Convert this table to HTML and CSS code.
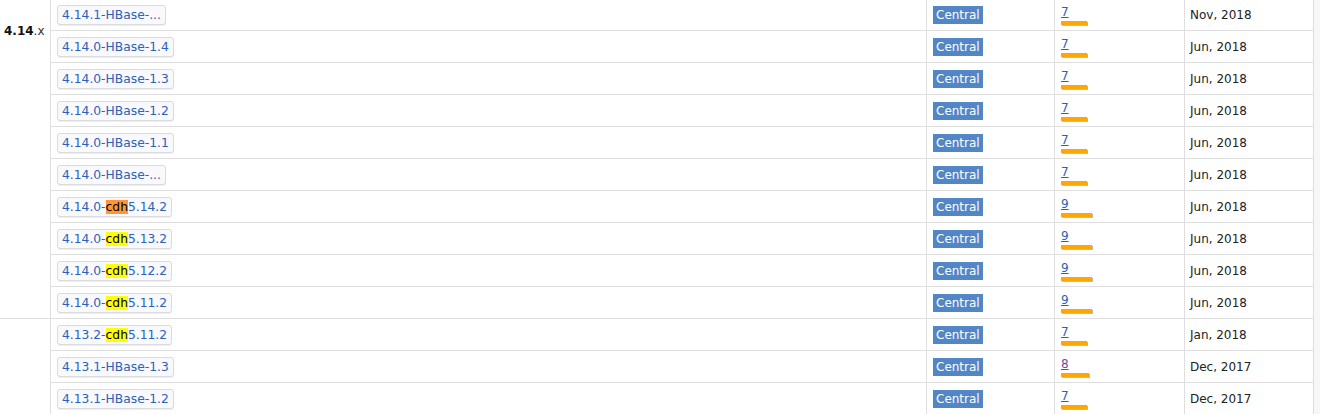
FILE: index.html
```html
<!DOCTYPE html>
<html lang="en">
<head>
<meta charset="utf-8">
<title>Versions</title>
<link rel="stylesheet" href="styles.css">
</head>
<body>
<div class="versions">
  <div class="group g-first"><b>4.14</b>.x</div>

  <div class="cell c-ver"><a class="vbtn">4.14.1-HBase-...</a></div>
  <div class="cell c-repo"><a class="repo">Central</a></div>
  <div class="cell c-use"><a class="num">7</a><div class="bar" style="width:26px"></div></div>
  <div class="cell c-date">Nov, 2018</div>

  <div class="cell c-ver"><a class="vbtn">4.14.0-HBase-1.4</a></div>
  <div class="cell c-repo"><a class="repo">Central</a></div>
  <div class="cell c-use"><a class="num">7</a><div class="bar" style="width:26px"></div></div>
  <div class="cell c-date">Jun, 2018</div>

  <div class="cell c-ver"><a class="vbtn">4.14.0-HBase-1.3</a></div>
  <div class="cell c-repo"><a class="repo">Central</a></div>
  <div class="cell c-use"><a class="num">7</a><div class="bar" style="width:26px"></div></div>
  <div class="cell c-date">Jun, 2018</div>

  <div class="cell c-ver"><a class="vbtn">4.14.0-HBase-1.2</a></div>
  <div class="cell c-repo"><a class="repo">Central</a></div>
  <div class="cell c-use"><a class="num">7</a><div class="bar" style="width:26px"></div></div>
  <div class="cell c-date">Jun, 2018</div>

  <div class="cell c-ver"><a class="vbtn">4.14.0-HBase-1.1</a></div>
  <div class="cell c-repo"><a class="repo">Central</a></div>
  <div class="cell c-use"><a class="num">7</a><div class="bar" style="width:26px"></div></div>
  <div class="cell c-date">Jun, 2018</div>

  <div class="cell c-ver"><a class="vbtn">4.14.0-HBase-...</a></div>
  <div class="cell c-repo"><a class="repo">Central</a></div>
  <div class="cell c-use"><a class="num">7</a><div class="bar" style="width:26px"></div></div>
  <div class="cell c-date">Jun, 2018</div>

  <div class="cell c-ver"><a class="vbtn">4.14.0-<mark class="hl hl-active">cdh</mark>5.14.2</a></div>
  <div class="cell c-repo"><a class="repo">Central</a></div>
  <div class="cell c-use"><a class="num">9</a><div class="bar" style="width:31px"></div></div>
  <div class="cell c-date">Jun, 2018</div>

  <div class="cell c-ver"><a class="vbtn">4.14.0-<mark class="hl">cdh</mark>5.13.2</a></div>
  <div class="cell c-repo"><a class="repo">Central</a></div>
  <div class="cell c-use"><a class="num">9</a><div class="bar" style="width:31px"></div></div>
  <div class="cell c-date">Jun, 2018</div>

  <div class="cell c-ver"><a class="vbtn">4.14.0-<mark class="hl">cdh</mark>5.12.2</a></div>
  <div class="cell c-repo"><a class="repo">Central</a></div>
  <div class="cell c-use"><a class="num">9</a><div class="bar" style="width:31px"></div></div>
  <div class="cell c-date">Jun, 2018</div>

  <div class="cell c-ver"><a class="vbtn">4.14.0-<mark class="hl">cdh</mark>5.11.2</a></div>
  <div class="cell c-repo"><a class="repo">Central</a></div>
  <div class="cell c-use"><a class="num">9</a><div class="bar" style="width:31px"></div></div>
  <div class="cell c-date">Jun, 2018</div>

  <div class="group g-second"></div>

  <div class="cell c-ver"><a class="vbtn">4.13.2-<mark class="hl">cdh</mark>5.11.2</a></div>
  <div class="cell c-repo"><a class="repo">Central</a></div>
  <div class="cell c-use"><a class="num">7</a><div class="bar" style="width:26px"></div></div>
  <div class="cell c-date">Jan, 2018</div>

  <div class="cell c-ver"><a class="vbtn">4.13.1-HBase-1.3</a></div>
  <div class="cell c-repo"><a class="repo">Central</a></div>
  <div class="cell c-use"><a class="num visited">8</a><div class="bar" style="width:28px"></div></div>
  <div class="cell c-date">Dec, 2017</div>

  <div class="cell c-ver"><a class="vbtn">4.13.1-HBase-1.2</a></div>
  <div class="cell c-repo"><a class="repo">Central</a></div>
  <div class="cell c-use"><a class="num">7</a><div class="bar" style="width:26px"></div></div>
  <div class="cell c-date">Dec, 2017</div>
</div>
</body>
</html>
```

FILE: styles.css
```css
html, body {
  margin: 0;
  padding: 0;
}

body {
  background: #f7f7f7;
  font-family: "DejaVu Sans", Verdana, sans-serif;
  font-size: 12px;
  line-height: 14px;
  color: #222;
  overflow: hidden;
}

.versions {
  display: grid;
  grid-template-columns: 51px 876px 128px 130px 129px;
  grid-auto-rows: 32px;
  width: 1314px;
  margin-top: -1px;
  background: #fff;
}

.group,
.cell {
  box-sizing: border-box;
  border-right: 1px solid #dedede;
  border-bottom: 1px solid #dedede;
}

.group {
  grid-column: 1;
  padding: 25px 0 0 4px;
  color: #333;
}

.g-first {
  grid-row: span 10;
}

.g-second {
  grid-row: span 3;
}

.group b {
  color: #111;
  font-weight: bold;
}

.cell {
  display: flex;
  align-items: center;
  padding-left: 6px;
}

.c-use {
  flex-direction: column;
  align-items: flex-start;
  padding-top: 6px;
}

.c-date {
  padding-left: 5px;
  color: #222;
}

.vbtn {
  display: inline-block;
  padding: 2px 4px;
  border: 1px solid #d9dbe1;
  border-radius: 3px;
  background: #f9f9fc;
  color: #2a62b9;
  font-size: 12.3px;
  white-space: nowrap;
  box-shadow: 0 1px 0 #eceef2;
}

.hl {
  background: #ffff00;
  color: #000;
  padding: 0;
}

.hl-active {
  background: #ff9632;
}

.repo {
  display: inline-block;
  padding: 2px 3px;
  background: #5286c5;
  color: #fff;
}

.num {
  color: #2d5fb3;
  text-decoration: underline;
}

.num.visited {
  color: #6b4b9e;
}

.bar {
  height: 4px;
  margin-top: 2px;
  background: #ffa600;
  box-shadow: 1px 1px 0 #b9b9b9;
}
```
